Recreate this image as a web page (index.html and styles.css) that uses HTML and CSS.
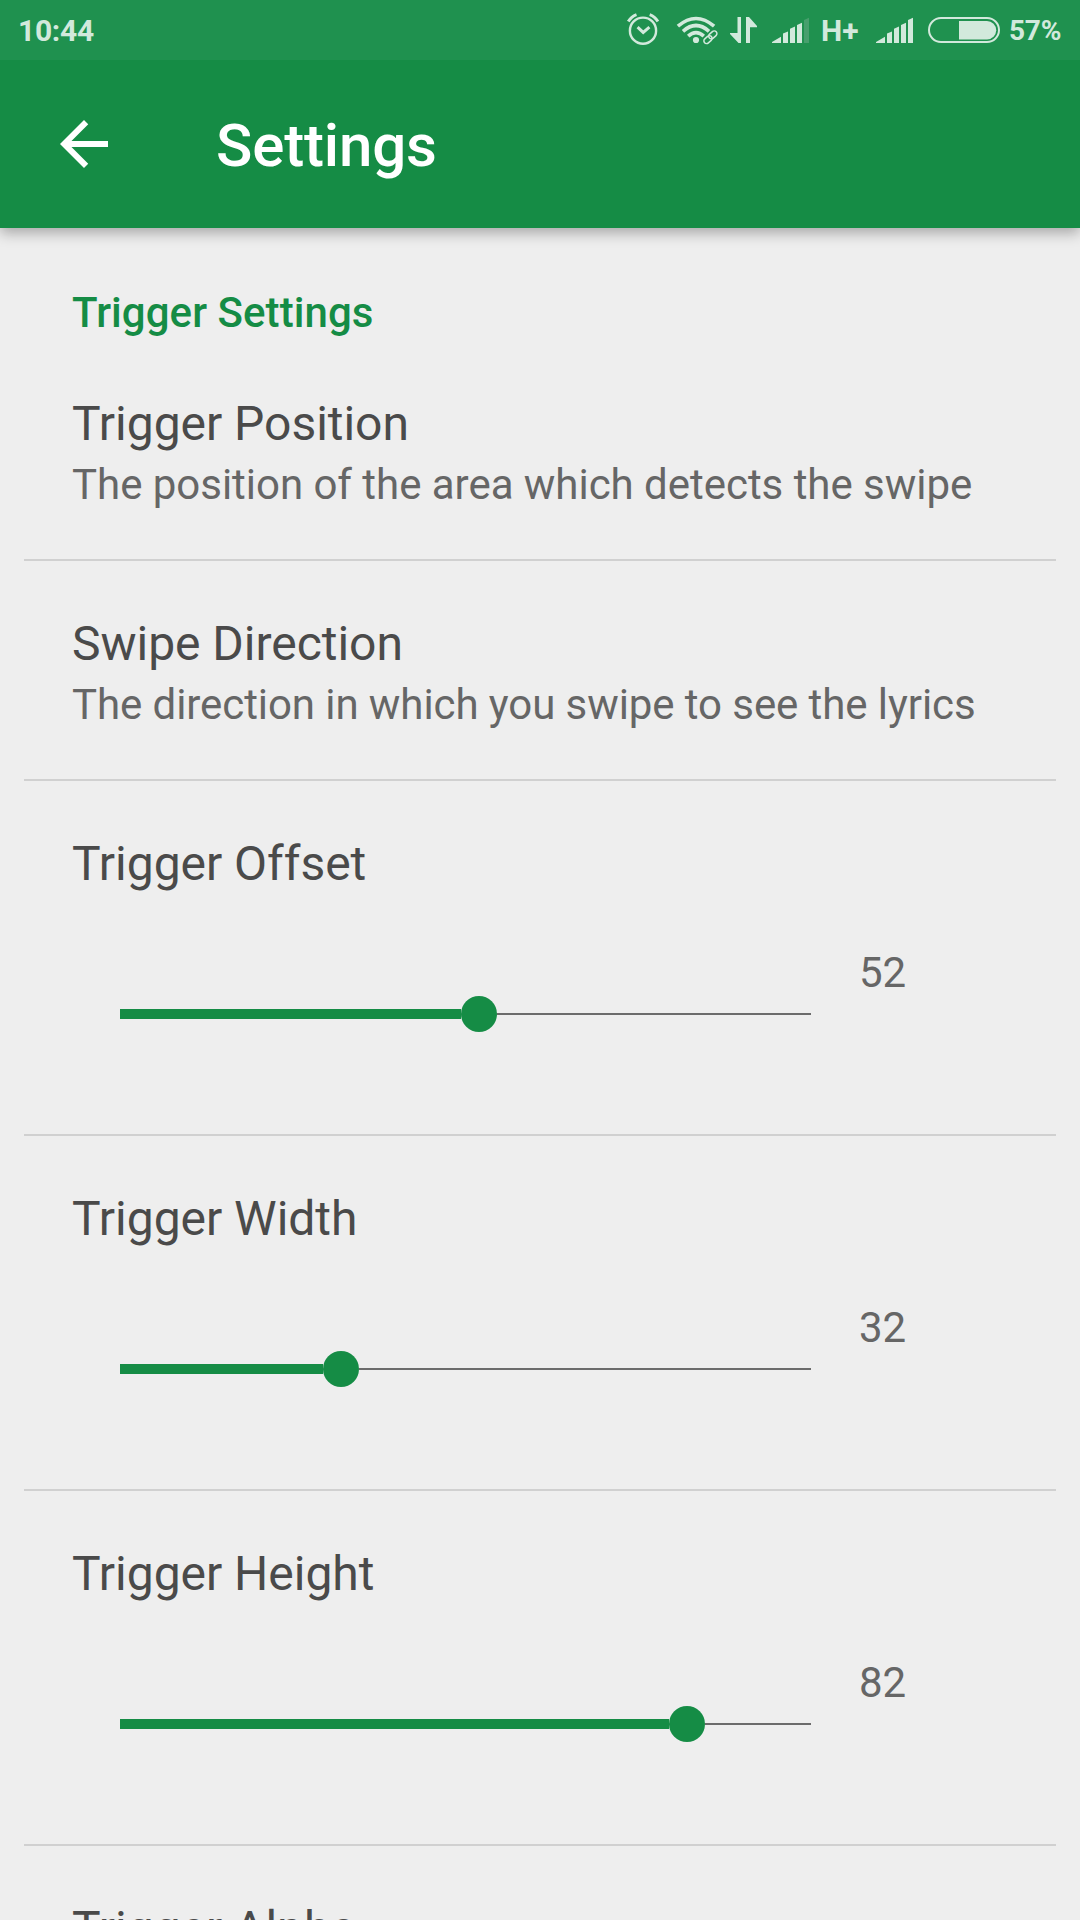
FILE: index.html
```html
<!DOCTYPE html>
<html lang="en">
<head>
<meta charset="utf-8">
<title>Settings</title>
<link rel="stylesheet" href="styles.css">
</head>
<body>
<div class="screen">
  <header class="top">
    <div class="status">
      <span class="clock">10:44</span>
      <svg class="alarm" width="34" height="60" viewBox="626 0 34 60">
        <circle cx="643" cy="30.7" r="13.1" class="line thin"/>
        <path d="M637.6 27.2l5.6 5.2 6.2-5.2" class="line thick"/>
        <path d="M628.3 21.6q2.9-5.2 8.2-7M657.9 21.6q-2.9-5.2-8.2-7" class="line thick"/>
      </svg>
      <svg class="wifi" width="42" height="60" viewBox="676 0 42 60">
        <circle cx="696" cy="40" r="3.1"/>
        <path d="M677.9 26.2q18.1-15.4 36.2 0M683 31.3q13-11.6 26 0M688.2 36.1q7.8-7 15.6 0" class="line arcs"/>
        <rect x="-9.5" y="-4.6" width="19" height="9.2" rx="4.6" class="gap" transform="translate(710.3 37.4) rotate(-45)"/>
        <g class="line link">
          <rect x="-4.6" y="-2.7" width="9.2" height="5.4" rx="2.7" transform="translate(712.8 34.9) rotate(-42)"/>
          <rect x="-4.6" y="-2.7" width="9.2" height="5.4" rx="2.7" transform="translate(708 39.6) rotate(-42)"/>
        </g>
      </svg>
      <svg class="data" width="28" height="60" viewBox="730 0 28 60">
        <path d="M737.5 17h3.5v26h-2.5L730 34v-1h7.5zM746 43V17h3l8 9v1.2h-7V43z"/>
      </svg>
      <svg class="signal" width="38" height="60" viewBox="0 0 38 60">
        <path d="M0 43v-1l9-5.3V43zM11 43v-9.5l5-2V43zM18 43V28.8l5-2.3V43zM25 43V25l5-2.3V43z"/>
        <path class="dim" d="M32 43V20l5-2.3V43z"/>
      </svg>
      <span class="network">H+</span>
      <svg class="signal second" width="38" height="60" viewBox="0 0 38 60">
        <path d="M0 43v-1l9-5.3V43zM11 43v-9.5l5-2V43zM18 43V28.8l5-2.3V43zM25 43V25l5-2.3V43zM32 43V20l5-2.3V43z"/>
      </svg>
      <svg class="battery" width="72" height="60" viewBox="928 0 72 60">
        <rect x="929" y="18" width="70" height="24" rx="12" class="line case"/>
        <path d="M959 21h28a9.2 9.2 0 0 1 0 18.4h-28z"/>
      </svg>
      <span class="percent">57%</span>
    </div>
    <div class="appbar">
      <svg class="back" width="72" height="72" viewBox="0 0 24 24"><path d="M20 11H7.83l5.59-5.59L12 4l-8 8 8 8 1.41-1.41L7.83 13H20v-2z"/></svg>
      <h1 class="heading">Settings</h1>
    </div>
  </header>
  <main class="list">
    <h2 class="category">Trigger Settings</h2>
    <section class="item">
      <div class="title">Trigger Position</div>
      <div class="summary">The position of the area which detects the swipe</div>
    </section>
    <section class="item">
      <div class="title">Swipe Direction</div>
      <div class="summary tight">The direction in which you swipe to see the lyrics</div>
    </section>
    <section class="item tall">
      <div class="title">Trigger Offset</div>
      <div class="control">
        <div class="slider" style="--value: 52%"><div class="fill"></div><div class="thumb"></div><div class="rest"></div></div>
        <div class="value">52</div>
      </div>
    </section>
    <section class="item tall">
      <div class="title">Trigger Width</div>
      <div class="control">
        <div class="slider" style="--value: 32%"><div class="fill"></div><div class="thumb"></div><div class="rest"></div></div>
        <div class="value">32</div>
      </div>
    </section>
    <section class="item tall">
      <div class="title">Trigger Height</div>
      <div class="control">
        <div class="slider" style="--value: 82%"><div class="fill"></div><div class="thumb"></div><div class="rest"></div></div>
        <div class="value">82</div>
      </div>
    </section>
    <section class="item tall">
      <div class="title">Trigger Alpha</div>
    </section>
  </main>
</div>
</body>
</html>
```
FILE: styles.css
```css
* { box-sizing: border-box; }

body {
  margin: 0;
  font-family: Roboto, sans-serif;
  background: #eee;
}

.screen {
  width: 1080px;
  height: 1920px;
  overflow: hidden;
  display: flex;
  flex-direction: column;
}

.top {
  flex: none;
  height: 228px;
  background: #158c45;
  box-shadow: 0 5px 13px rgba(0, 0, 0, .3);
}

.status {
  height: 60px;
  display: flex;
  background: #1f914f;
  color: #d2e9dc;
  fill: #d2e9dc;
  font-weight: 700;
  line-height: 60px;
  white-space: nowrap;
}

.status svg { flex: none; display: block; }
.clock { width: 606px; padding: 1px 0 0 18px; font-size: 30px; letter-spacing: -.3px; }
.alarm { margin-left: 20px; }
.wifi { margin-left: 16px; }
.data { margin-left: 12px; }
.signal { margin-left: 14px; }
.network { width: 54px; padding: 1px 0 0 11px; font-size: 30px; }
.second { margin-left: 12px; }
.battery { margin-left: 14px; }
.percent { margin-left: 9px; padding-top: 1px; font-size: 28px; letter-spacing: -.2px; }

.line { fill: none; stroke: #d2e9dc; }
.thin { stroke-width: 2.4; }
.thick { stroke-width: 3; }
.arcs { stroke-width: 3.6; }
.link { stroke-width: 1.5; }
.gap { fill: #1f914f; }
.case { stroke-width: 2; }
.dim { fill: #479f6d; }

.appbar {
  height: 168px;
  display: flex;
  align-items: center;
  padding-left: 48px;
}

.back { fill: #fff; }

.heading {
  margin: 4px 0 0 96px;
  color: #fff;
  font-size: 60px;
  font-weight: 500;
  letter-spacing: -.15px;
  line-height: 70px;
}

.category {
  margin: 0;
  height: 113px;
  padding: 60px 0 0 72px;
  color: #158c45;
  font-size: 42px;
  font-weight: 500;
  letter-spacing: .06px;
  line-height: 49px;
}

.item {
  flex: none;
  height: 220px;
  margin: 0 24px;
  padding: 55px 0 0 48px;
  border-bottom: 2px solid #d0d0d0;
}

.tall { height: 355px; }

.title {
  color: #4a4a4a;
  font-size: 48px;
  letter-spacing: -.03px;
  line-height: 56px;
}

.summary {
  margin-top: 8px;
  color: #666;
  font-size: 42px;
  letter-spacing: -.03px;
  line-height: 49px;
  white-space: nowrap;
}

.tight { letter-spacing: -.08px; }

.control {
  display: flex;
  align-items: flex-start;
  padding: 56px 0 0 48px;
}

.slider {
  width: 691px;
  height: 36px;
  margin-top: 48px;
  display: flex;
  align-items: center;
}

.fill {
  width: calc(var(--value) - 18px);
  height: 10px;
  background: #158c45;
}

.thumb {
  flex: none;
  width: 36px;
  height: 36px;
  border-radius: 50%;
  background: #158c45;
}

.rest {
  flex: 1;
  height: 2px;
  background: #6b6b6b;
}

.value {
  margin-left: 48px;
  color: #666;
  font-size: 42px;
  line-height: 49px;
}
```
